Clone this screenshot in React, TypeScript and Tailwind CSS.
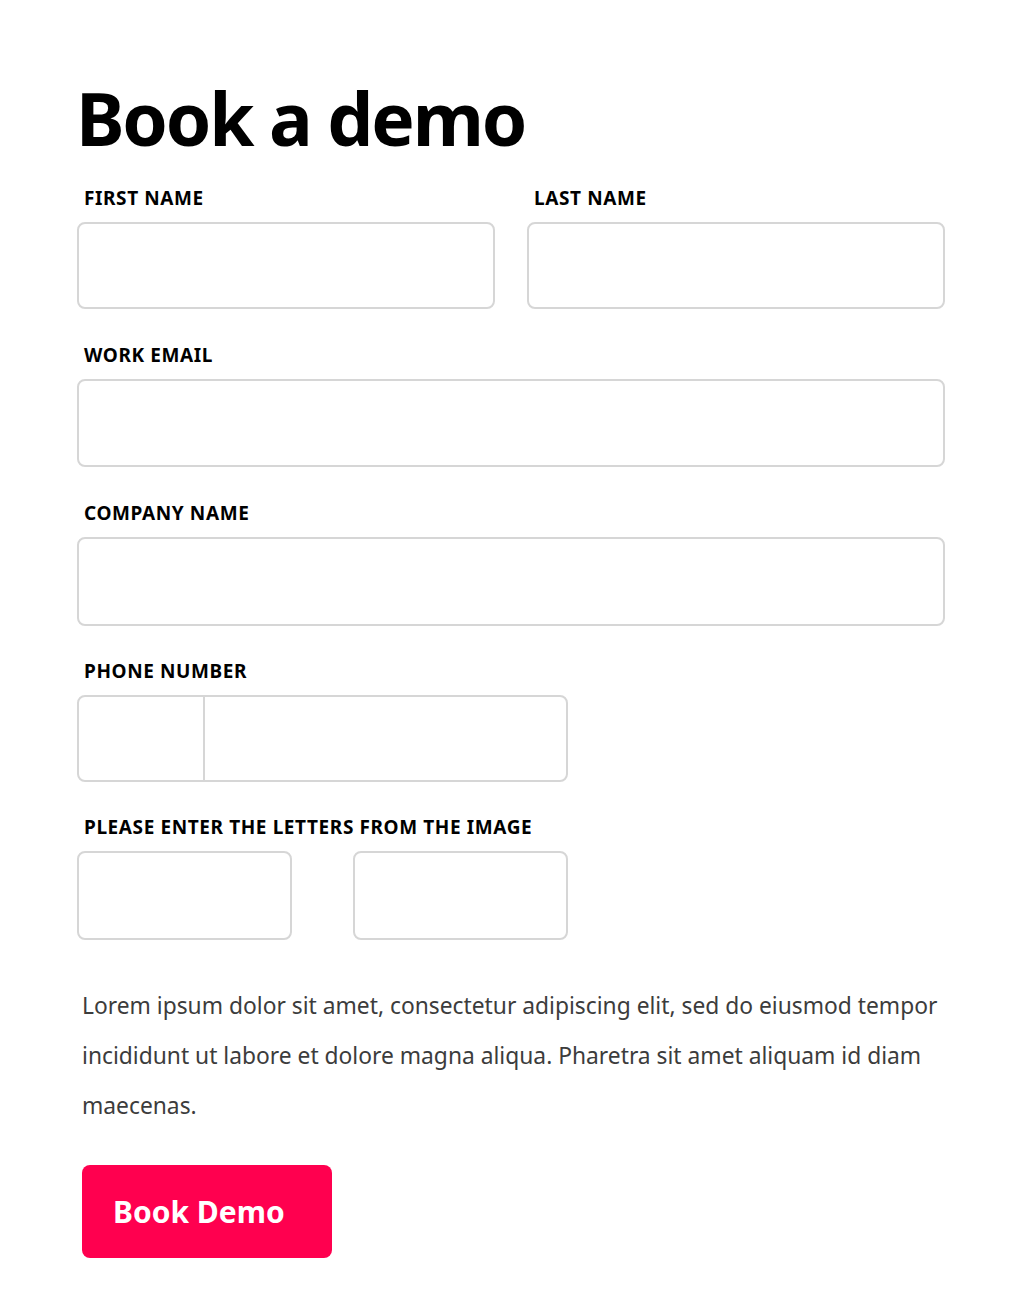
import React from 'react';

const Label: React.FC<{ children: React.ReactNode }> = ({ children }) => (
  <label className="block pl-[7px] text-[19px] leading-[24px] font-bold tracking-[0.6px] text-black uppercase">
    {children}
  </label>
);

const boxCls = 'block rounded-[8px] border-2 border-[#d6d6d6] bg-white px-4 outline-none';

export default function App() {
  return (
    <div className="min-h-[1302px] bg-white font-['Noto_Sans',sans-serif] text-black">
      <form className="w-[868px] ml-[77px] pt-[73px]" onSubmit={(e) => e.preventDefault()}>
        <h1 className="-ml-[1px] text-[73px] leading-[90px] font-bold tracking-[-2.2px]">Book a demo</h1>

        <div className="mt-[23px] grid grid-cols-2 gap-x-[32px]">
          <div>
            <Label>First name</Label>
            <input className={`${boxCls} mt-[12px] h-[87px] w-full`} />
          </div>
          <div>
            <Label>Last name</Label>
            <input className={`${boxCls} mt-[12px] h-[87px] w-full`} />
          </div>
        </div>

        <div className="mt-[34px]">
          <Label>Work email</Label>
          <input className={`${boxCls} mt-[12px] h-[88px] w-full`} />
        </div>

        <div className="mt-[34px]">
          <Label>Company name</Label>
          <input className={`${boxCls} mt-[12px] h-[89px] w-full`} />
        </div>

        <div className="mt-[33px]">
          <Label>Phone number</Label>
          <div className="mt-[12px] flex h-[87px] w-[491px] overflow-hidden rounded-[8px] border-2 border-[#d6d6d6]">
            <input className="h-full w-[126px] border-r-2 border-[#d6d6d6] px-3 outline-none" />
            <input className="h-full flex-1 px-4 outline-none" />
          </div>
        </div>

        <div className="mt-[33px]">
          <Label>Please enter the letters from the image</Label>
          <div className="mt-[12px] flex gap-[61px]">
            <input className={`${boxCls} h-[89px] w-[215px]`} />
            <input className={`${boxCls} h-[89px] w-[215px]`} />
          </div>
        </div>

        <p className="mt-[41px] pl-[5px] text-[22.8px] leading-[50px] text-[#3c3c3c]">
          Lorem ipsum dolor sit amet, consectetur adipiscing elit, sed do eiusmod tempor incididunt ut labore et dolore
          magna aliqua. Pharetra sit amet aliquam id diam maecenas.
        </p>

        <button
          type="submit"
          className="mt-[34px] ml-[5px] h-[93px] w-[250px] rounded-[8px] bg-[#ff004f] pl-[31px] text-left text-[30px] font-bold text-white"
        >
          Book Demo
        </button>
      </form>
    </div>
  );
}
